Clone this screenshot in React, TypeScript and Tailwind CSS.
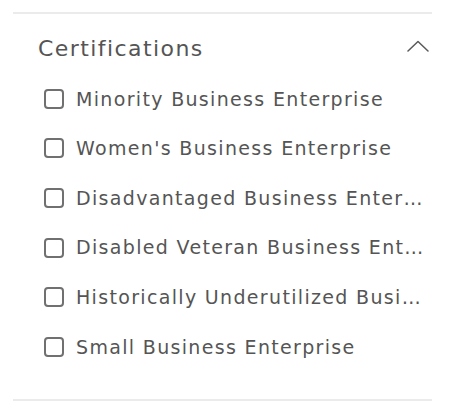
const certifications = [
  'Minority Business Enterprise',
  "Women's Business Enterprise",
  'Disadvantaged Business Enterprise',
  'Disabled Veteran Business Enterprise',
  'Historically Underutilized Business Zone',
  'Small Business Enterprise',
]

function ChevronUp() {
  return (
    <svg width="22" height="12" viewBox="0 0 22 12" fill="none" className="text-[#595959]">
      <polyline points="1,11 11,1.5 21,11" stroke="currentColor" strokeWidth="1.5" strokeLinecap="round" strokeLinejoin="round" />
    </svg>
  )
}

export default function App() {
  return (
    <div className="bg-white w-[450px] h-[408px] pt-[12px]" style={{ fontFamily: '"DejaVu Sans", sans-serif' }}>
      <div className="ml-[13px] w-[419px] border-t-2 border-b-2 border-[#ebebeb] pb-[27px]">
        <div className="flex items-center justify-between pl-[25px] pr-[3px] pt-[4px] h-[60px]">
          <span className="text-[22px] text-[#555] tracking-[0.065em] translate-y-[2px]">Certifications</span>
          <ChevronUp />
        </div>
        <ul className="pl-[31px] pr-[2px]">
          {certifications.map((c) => (
            <li key={c} className="flex items-center gap-[12px] h-[49.6px]">
              <span className="shrink-0 w-[20px] h-[20px] border-2 border-[#707070] rounded-[4px]" />
              <span className="truncate text-[19px] text-[#555] tracking-[0.07em]">{c}</span>
            </li>
          ))}
        </ul>
      </div>
    </div>
  )
}
